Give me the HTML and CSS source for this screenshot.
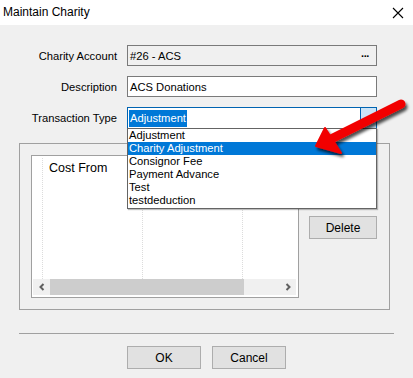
FILE: index.html
```html
<!DOCTYPE html>
<html>
<head>
<meta charset="utf-8">
<link rel="stylesheet" href="styles.css">
</head>
<body>
<div class="window">
  <div class="titlebar">
    <span class="title">Maintain Charity</span>
    <svg class="close" width="12" height="12" viewBox="0 0 12 12"><path d="M1 1 L11 11 M11 1 L1 11" stroke="#000" stroke-width="1.1" fill="none"/></svg>
  </div>
  <div class="form">
    <div class="row">
      <label class="lbl">Charity Account</label>
      <div class="field readonly"><span>#26 - ACS</span><span class="dots">&middot;&middot;&middot;</span></div>
    </div>
    <div class="row">
      <label class="lbl">Description</label>
      <div class="field"><span>ACS Donations</span></div>
    </div>
    <div class="row r3">
      <label class="lbl">Transaction Type</label>
      <div class="field combo"><span class="sel">Adjustment</span><span class="dropbtn"></span></div>
    </div>
  </div>
  <div class="group">
    <div class="panel">
      <div class="listarea">
        <div class="col c1"></div>
        <div class="col c2"><span class="hdr">Cost From</span></div>
        <div class="col c3"></div>
        <div class="col c4"></div>
      </div>
      <div class="hscroll">
        <span class="arr"><svg width="8" height="8" viewBox="0 0 8 8"><path d="M5.5 1 L2.5 4 L5.5 7" stroke="#606060" stroke-width="2" fill="none"/></svg></span>
        <span class="thumb"></span>
        <span class="track"></span>
        <span class="arr"><svg width="8" height="8" viewBox="0 0 8 8"><path d="M2.5 1 L5.5 4 L2.5 7" stroke="#606060" stroke-width="2" fill="none"/></svg></span>
      </div>
    </div>
    <div class="sidebtns">
      <button class="btn">Add</button>
      <button class="btn">Delete</button>
    </div>
  </div>
  <div class="sep"></div>
  <div class="footer">
    <button class="btn big">OK</button>
    <button class="btn big">Cancel</button>
  </div>

  <ul class="dropdown">
    <li>Adjustment</li>
    <li class="hl">Charity Adjustment</li>
    <li>Consignor Fee</li>
    <li>Payment Advance</li>
    <li>Test</li>
    <li>testdeduction</li>
  </ul>

  <svg class="arrow" width="413" height="378" viewBox="0 0 413 378">
    <defs>
      <filter id="sh" x="-20%" y="-20%" width="140%" height="140%">
        <feGaussianBlur in="SourceAlpha" stdDeviation="1.6"/>
        <feOffset dx="2" dy="3" result="o"/>
        <feComponentTransfer><feFuncA type="linear" slope="0.7"/></feComponentTransfer>
        <feMerge><feMergeNode/><feMergeNode in="SourceGraphic"/></feMerge>
      </filter>
    </defs>
    <g filter="url(#sh)">
      <line x1="401" y1="104" x2="331" y2="139" stroke="#f20000" stroke-width="9" stroke-linecap="round"/>
      <polygon points="316,146 325,128 341,153" fill="#f20000" stroke="#f20000" stroke-width="2" stroke-linejoin="round"/>
    </g>
  </svg>
</div>
</body>
</html>
```

FILE: styles.css
```css
* { box-sizing: border-box; }
html, body { margin: 0; padding: 0; }
body {
  font-family: "Liberation Sans", Arial, sans-serif;
  font-size: 11px;
  color: #000;
}
.window {
  position: relative;
  width: 413px;
  height: 378px;
  background: #f0f0f0;
  overflow: hidden;
}
.titlebar {
  height: 25px;
  background: #fff;
  display: flex;
  align-items: center;
  justify-content: space-between;
  padding: 0 9px 0 3px;
  font-size: 12px;
}
.title { margin-top: -1px; }
.close { display: block; }
.form {
  padding-top: 20px;
  display: flex;
  flex-direction: column;
  gap: 10px;
}
.row {
  display: flex;
  align-items: center;
  height: 21px;
}
.row.r3 { height: 22px; }
.lbl {
  width: 118px;
  text-align: right;
  padding-right: 1px;
  font-size: 11.2px;
}
.field {
  margin-left: 9px;
  width: 250px;
  height: 100%;
  border: 1px solid #7a7a7a;
  background: #fff;
  display: flex;
  align-items: center;
  justify-content: space-between;
  padding-left: 2px;
  font-size: 11.2px;
}
.field.readonly { background: #f0f0f0; }
.dots {
  font-weight: bold;
  letter-spacing: -1px;
  padding-right: 7px;
  font-size: 11px;
}
.combo {
  border-color: #0063b1;
  padding-left: 1px;
}
.sel {
  background: #0078d7;
  color: #fff;
  padding: 2px 1px 2px 1px;
  line-height: 13px;
}
.dropbtn {
  width: 16px;
  height: 100%;
  background: #cce4f7;
  border-left: 1px solid #0063b1;
}
.group {
  margin: 14px 0 0 19px;
  width: 371px;
  height: 167px;
  border: 1px solid #a0a0a0;
  display: flex;
  padding: 11px 12px 0 11px;
  gap: 10px;
}
.panel {
  width: 268px;
  height: 143px;
  border: 1px solid #a0a0a0;
  background: #fff;
  display: flex;
  flex-direction: column;
  padding: 1px 2px 2px 1px;
}
.listarea {
  flex: 1;
  display: flex;
  padding-top: 1px;
}
.col {
  border-right: 1px dotted #dcdcdc;
  height: 100%;
}
.c1 { width: 10px; }
.c2 { width: 100px; padding: 3px 0 0 6px; font-size: 12.5px; }
.c3 { width: 100px; }
.c4 { flex: 1; border-right: none; }
.hdr { white-space: nowrap; }
.hscroll {
  height: 16px;
  display: flex;
  background: #f0f0f0;
}
.arr {
  width: 17px;
  display: flex;
  align-items: center;
  justify-content: center;
}
.arr svg { display: block; }
.thumb { width: 194px; background: #cdcdcd; }
.track { flex: 1; }
.sidebtns {
  display: flex;
  flex-direction: column;
  gap: 8px;
  padding-top: 30px;
}
.btn {
  font-family: inherit;
  font-size: 12px;
  width: 68px;
  height: 23px;
  background: #e1e1e1;
  border: 1px solid #adadad;
  padding: 0;
  color: #000;
}
.sep {
  margin: 23px 0 0 19px;
  width: 375px;
  height: 1px;
  background: #a0a0a0;
}
.footer {
  display: flex;
  gap: 11px;
  margin: 12px 0 0 127px;
}
.btn.big { width: 74px; }
.dropdown {
  position: absolute;
  left: 127px;
  top: 128px;
  width: 250px;
  margin: 0;
  padding: 0 0 1px 0;
  list-style: none;
  background: #fff;
  border: 1px solid #646464;
  box-shadow: 1px 1px 1px rgba(0,0,0,0.25);
}
.dropdown li {
  height: 13px;
  line-height: 13px;
  padding-left: 1px;
  font-size: 11.2px;
}
.dropdown li.hl {
  background: #0078d7;
  color: #fff;
}
.arrow {
  position: absolute;
  left: 0;
  top: 0;
  pointer-events: none;
}
```
